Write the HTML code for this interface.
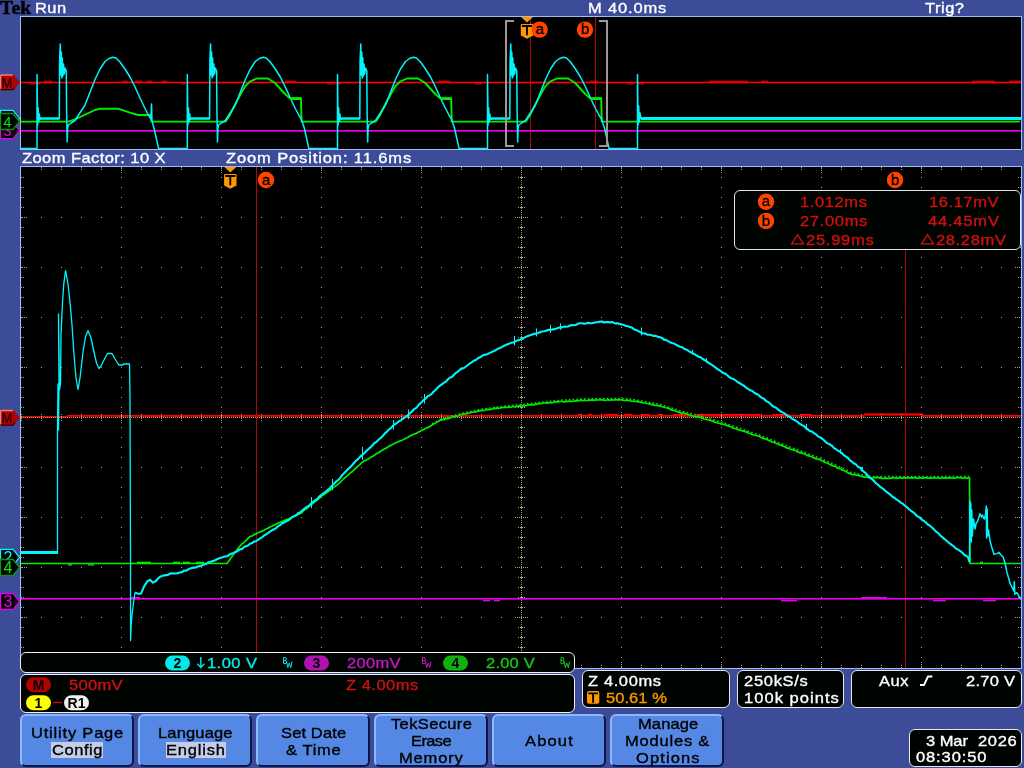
<!DOCTYPE html>
<html><head><meta charset="utf-8"><title>Tek</title>
<style>
html,body{margin:0;padding:0;}
body{width:1024px;height:768px;background:#3c4c98;position:relative;overflow:hidden;font-family:"Liberation Sans",sans-serif;}
.t{position:absolute;white-space:pre;-webkit-text-stroke:0.35px currentColor;font-family:"Liberation Sans",sans-serif;}
.box{position:absolute;box-sizing:border-box;background:#000400;border:1px solid #e8e8ec;border-radius:6px;}
.btn{position:absolute;box-sizing:border-box;top:714px;height:53px;width:114px;background:#5488e4;border-radius:6px;border-top:2px solid #8cb8fc;border-left:2px solid #8cb8fc;border-right:2px solid #0c1648;border-bottom:2px solid #0c1648;}
.hl{position:absolute;background:#c4cce8;}
.pill{position:absolute;width:25px;height:15px;border-radius:8px;}
svg{position:absolute;left:0;top:0;}
</style></head><body>
<div style="position:absolute;left:20px;top:16px;width:1002px;height:134px;box-sizing:border-box;border:1px solid #9cbcf8;background:#000"></div>
<div style="position:absolute;left:20px;top:166px;width:1002px;height:503px;box-sizing:border-box;border:1px solid #9cbcf8;background:#000"></div>
<svg width="1024" height="768" viewBox="0 0 1024 768">
<defs><clipPath id="c1"><rect x="21" y="17" width="1000" height="132"/></clipPath>
<clipPath id="c2"><rect x="21" y="167" width="1000" height="501"/></clipPath></defs>
<g clip-path="url(#c1)">
<g shape-rendering="crispEdges">
<line x1="530.5" x2="530.5" y1="17" y2="149" stroke="#b00808"/>
<line x1="595.5" x2="595.5" y1="17" y2="149" stroke="#b00808"/>
</g>
<g shape-rendering="crispEdges"><rect x="21" y="130" width="1000" height="1" fill="#e400e4"/><rect x="21" y="131" width="1000" height="1" fill="#980098"/></g>
<rect x="21" y="81.7" width="1000" height="1.6" fill="#ff0000"/><rect x="44" y="80.7" width="8" height="1" fill="#ff0000"/><rect x="122" y="80.7" width="6" height="1" fill="#ff0000"/><rect x="135" y="80.7" width="7" height="1" fill="#ff0000"/><rect x="147" y="80.7" width="5" height="1" fill="#ff0000"/><rect x="162" y="80.7" width="5" height="1" fill="#ff0000"/><rect x="285" y="80.7" width="11" height="1" fill="#ff0000"/><rect x="439" y="80.7" width="11" height="1" fill="#ff0000"/><rect x="590" y="80.7" width="8" height="1" fill="#ff0000"/><rect x="709" y="80.7" width="39" height="1" fill="#ff0000"/><rect x="761" y="80.7" width="7" height="1" fill="#ff0000"/><rect x="972" y="80.7" width="23" height="1" fill="#ff0000"/><rect x="1009" y="80.7" width="12" height="1" fill="#ff0000"/><rect x="327" y="83.4" width="7" height="1" fill="#ff0000"/><rect x="335" y="83.4" width="6" height="1" fill="#ff0000"/><rect x="475" y="83.4" width="7" height="1" fill="#ff0000"/><rect x="627" y="83.4" width="7" height="1" fill="#ff0000"/><rect x="638" y="83.4" width="6" height="1" fill="#ff0000"/><rect x="29" y="83.4" width="11" height="1" fill="#ff0000"/><rect x="181" y="83.4" width="5" height="1" fill="#ff0000"/>
<polyline points="21.0,121.6 68.0,121.6 75.0,119.5 85.0,114.6 95.0,110.0 100.0,108.7 118.0,108.7 130.0,112.6 138.0,115.0 150.4,115.0 151.5,121.6 225.6,121.6 229.3,116.0 235.3,103.8 245.3,86.0 250.3,81.4 256.8,78.5 268.0,78.5 275.0,83.0 285.0,94.0 290.0,98.4 301.0,98.4 301.5,121.6 375.8,121.6 379.5,116.0 385.5,103.8 395.5,86.0 400.5,81.4 407.0,78.5 418.2,78.5 425.2,83.0 435.2,94.0 440.2,98.4 451.2,98.4 451.7,121.6 525.8,121.6 529.5,116.0 535.5,103.8 545.5,86.0 550.5,81.4 557.0,78.5 568.2,78.5 575.2,83.0 585.2,94.0 590.2,98.4 601.2,98.4 601.7,121.6 1020.0,121.6" fill="none" stroke="#00ec00" stroke-width="1.9" stroke-linejoin="round"/>
<polyline points="21.0,148.5 37.0,148.5 37.0,74.5 37.6,125.0 38.2,108.0 38.8,122.0 39.4,114.0 40.0,119.5 41.0,118.5 59.3,118.5 59.6,60.0 60.3,44.0 60.8,75.0 61.3,52.0 61.8,78.0 62.3,58.0 62.9,76.0 63.5,64.0 64.2,74.0 65.0,68.0 66.3,71.0 66.6,110.0 67.2,142.0 67.6,128.0 68.3,125.0 71.0,123.0 75.0,120.5 85.0,105.0 95.0,79.5 100.0,69.0 105.0,61.5 109.0,58.5 113.0,57.3 116.0,58.0 120.0,62.0 125.0,69.0 130.0,77.0 135.0,87.0 140.0,98.0 145.0,108.5 149.0,116.0 151.0,119.0 151.5,104.0 152.0,121.0 154.0,128.0 156.0,137.0 158.0,146.0 158.6,148.5 187.3,148.5 187.3,74.5 187.9,125.0 188.5,108.0 189.1,122.0 189.7,114.0 190.3,119.5 191.3,118.5 209.6,118.5 209.9,60.0 210.6,44.0 211.1,75.0 211.6,52.0 212.1,78.0 212.6,58.0 213.2,76.0 213.8,64.0 214.5,74.0 215.3,68.0 216.6,71.0 216.9,110.0 217.5,142.0 217.9,128.0 218.6,125.0 221.3,123.0 225.3,120.5 235.3,105.0 245.3,79.5 250.3,69.0 255.3,61.5 259.3,58.5 263.3,57.3 266.3,58.0 270.3,62.0 275.3,69.0 280.3,77.0 285.3,87.0 290.3,98.0 295.3,108.5 299.3,116.0 301.3,119.0 304.3,128.0 306.3,137.0 308.3,146.0 308.9,148.5 337.5,148.5 337.5,74.5 338.1,125.0 338.7,108.0 339.3,122.0 339.9,114.0 340.5,119.5 341.5,118.5 359.8,118.5 360.1,60.0 360.8,44.0 361.3,75.0 361.8,52.0 362.3,78.0 362.8,58.0 363.4,76.0 364.0,64.0 364.7,74.0 365.5,68.0 366.8,71.0 367.1,110.0 367.7,142.0 368.1,128.0 368.8,125.0 371.5,123.0 375.5,120.5 385.5,105.0 395.5,79.5 400.5,69.0 405.5,61.5 409.5,58.5 413.5,57.3 416.5,58.0 420.5,62.0 425.5,69.0 430.5,77.0 435.5,87.0 440.5,98.0 445.5,108.5 449.5,116.0 451.5,119.0 454.5,128.0 456.5,137.0 458.5,146.0 459.1,148.5 487.5,148.5 487.5,74.5 488.1,125.0 488.7,108.0 489.3,122.0 489.9,114.0 490.5,119.5 491.5,118.5 509.8,118.5 510.1,60.0 510.8,44.0 511.3,75.0 511.8,52.0 512.3,78.0 512.8,58.0 513.4,76.0 514.0,64.0 514.7,74.0 515.5,68.0 516.8,71.0 517.1,110.0 517.7,142.0 518.1,128.0 518.8,125.0 521.5,123.0 525.5,120.5 535.5,105.0 545.5,79.5 550.5,69.0 555.5,61.5 559.5,58.5 563.5,57.3 566.5,58.0 570.5,62.0 575.5,69.0 580.5,77.0 585.5,87.0 590.5,98.0 595.5,108.5 599.5,116.0 601.5,119.0 604.5,128.0 606.5,137.0 608.5,146.0 609.1,148.5 637.5,148.5 637.5,74.5 638.1,125.0 638.7,106.0 639.3,122.0 640.0,113.0 641.0,118.5 1020.0,118.5" fill="none" stroke="#00f4fc" stroke-width="1.5" stroke-linejoin="round"/><rect x="290.0" y="97.2" width="11.5" height="2.8" fill="#00ec00"/><rect x="440.2" y="97.2" width="11.5" height="2.8" fill="#00ec00"/><rect x="590.2" y="97.2" width="11.5" height="2.8" fill="#00ec00"/><rect x="40.0" y="117.4" width="19.5" height="2.3" fill="#00f4fc"/><rect x="190.3" y="117.4" width="19.5" height="2.3" fill="#00f4fc"/><rect x="340.5" y="117.4" width="19.5" height="2.3" fill="#00f4fc"/><rect x="490.5" y="117.4" width="19.5" height="2.3" fill="#00f4fc"/>
<rect x="641" y="117" width="380" height="3" fill="#00f4fc" shape-rendering="crispEdges"/>
<g fill="none" stroke="#a09898" stroke-width="2" shape-rendering="crispEdges">
<polyline points="514,20.5 506,20.5 506,146 514,146"/>
<polyline points="599,20.5 607,20.5 607,146 599,146"/>
</g>
</g>
<g clip-path="url(#c2)">
<g shape-rendering="crispEdges"><rect x="21" y="416" width="47" height="1" fill="#ff0000"/><rect x="21" y="417" width="47" height="1" fill="#a00000"/>
<rect x="67" y="415" width="798" height="1" fill="#ff0000"/><rect x="67" y="416" width="798" height="1" fill="#d00000"/>
<rect x="864" y="414" width="59" height="1" fill="#ff0000"/><rect x="864" y="415" width="59" height="1" fill="#a00000"/><rect x="864" y="413" width="59" height="1" fill="#a00000"/>
<rect x="922" y="415" width="99" height="1" fill="#ff0000"/><rect x="922" y="416" width="99" height="1" fill="#d00000"/><rect x="118" y="416" width="6" height="1" fill="#ff0000"/><rect x="141" y="416" width="26" height="1" fill="#ff0000"/><rect x="173" y="416" width="15" height="1" fill="#ff0000"/><rect x="194" y="416" width="4" height="1" fill="#ff0000"/><rect x="578" y="414" width="4" height="1" fill="#ff0000"/><rect x="588" y="414" width="4" height="1" fill="#ff0000"/><rect x="604" y="414" width="14" height="1" fill="#ff0000"/><rect x="624" y="414" width="8" height="1" fill="#ff0000"/><rect x="642" y="414" width="8" height="1" fill="#ff0000"/><rect x="658" y="414" width="5" height="1" fill="#ff0000"/><rect x="673" y="414" width="15" height="1" fill="#ff0000"/><rect x="696" y="414" width="64" height="1" fill="#ff0000"/><rect x="772" y="414" width="18" height="1" fill="#ff0000"/><rect x="800" y="414" width="12" height="1" fill="#ff0000"/><rect x="846" y="416" width="10" height="1" fill="#ff0000"/><rect x="937" y="416" width="9" height="1" fill="#ff0000"/></g>
<g fill="#b0a078"><g stroke="#b0a078" stroke-width="1" shape-rendering="crispEdges"><line x1="21" x2="1021" y1="217.5" y2="217.5" stroke-dasharray="1 19"/><line x1="121.5" x2="121.5" y1="167" y2="668" stroke-dasharray="1 9"/><line x1="21" x2="1021" y1="267.5" y2="267.5" stroke-dasharray="1 19"/><line x1="221.5" x2="221.5" y1="167" y2="668" stroke-dasharray="1 9"/><line x1="21" x2="1021" y1="317.5" y2="317.5" stroke-dasharray="1 19"/><line x1="321.5" x2="321.5" y1="167" y2="668" stroke-dasharray="1 9"/><line x1="21" x2="1021" y1="367.5" y2="367.5" stroke-dasharray="1 19"/><line x1="421.5" x2="421.5" y1="167" y2="668" stroke-dasharray="1 9"/><line x1="21" x2="1021" y1="467.5" y2="467.5" stroke-dasharray="1 19"/><line x1="621.5" x2="621.5" y1="167" y2="668" stroke-dasharray="1 9"/><line x1="21" x2="1021" y1="517.5" y2="517.5" stroke-dasharray="1 19"/><line x1="721.5" x2="721.5" y1="167" y2="668" stroke-dasharray="1 9"/><line x1="21" x2="1021" y1="567.5" y2="567.5" stroke-dasharray="1 19"/><line x1="821.5" x2="821.5" y1="167" y2="668" stroke-dasharray="1 9"/><line x1="21" x2="1021" y1="617.5" y2="617.5" stroke-dasharray="1 19"/><line x1="921.5" x2="921.5" y1="167" y2="668" stroke-dasharray="1 9"/><line x1="21" x2="1021" y1="417.5" y2="417.5" stroke-dasharray="1 1"/><line x1="521.5" x2="521.5" y1="166" y2="668" stroke-dasharray="3 1 1 1 1 1 1 1"/><line x1="21" x2="1021" y1="414.5" y2="414.5" stroke-dasharray="1 19"/><line x1="21" x2="1021" y1="416.5" y2="416.5" stroke-dasharray="1 19"/><line x1="21" x2="1021" y1="418.5" y2="418.5" stroke-dasharray="1 19"/><line x1="21" x2="1021" y1="420.5" y2="420.5" stroke-dasharray="1 19"/><line x1="121" x2="921" y1="412.5" y2="412.5" stroke-dasharray="1 99"/><line x1="121" x2="921" y1="415.5" y2="415.5" stroke-dasharray="1 99"/><line x1="121" x2="921" y1="422.5" y2="422.5" stroke-dasharray="1 99"/><line x1="518.5" x2="518.5" y1="167" y2="668" stroke-dasharray="0 10 1 9 1 9 1 9 1 9"/><line x1="520.5" x2="520.5" y1="167" y2="668" stroke-dasharray="0 10 1 9 1 9 1 9 1 9"/><line x1="522.5" x2="522.5" y1="167" y2="668" stroke-dasharray="0 10 1 9 1 9 1 9 1 9"/><line x1="524.5" x2="524.5" y1="167" y2="668" stroke-dasharray="0 10 1 9 1 9 1 9 1 9"/><line x1="515.5" x2="515.5" y1="217" y2="618" stroke-dasharray="1 49"/><line x1="517.5" x2="517.5" y1="217" y2="618" stroke-dasharray="1 49"/><line x1="519.5" x2="519.5" y1="217" y2="618" stroke-dasharray="1 49"/><line x1="523.5" x2="523.5" y1="217" y2="618" stroke-dasharray="1 49"/><line x1="525.5" x2="525.5" y1="217" y2="618" stroke-dasharray="1 49"/><line x1="527.5" x2="527.5" y1="217" y2="618" stroke-dasharray="1 49"/></g><rect x="21" y="177" width="1" height="1"/><rect x="1020" y="177" width="1" height="1"/><rect x="23" y="177" width="1" height="1"/><rect x="1018" y="177" width="1" height="1"/><rect x="21" y="187" width="1" height="1"/><rect x="1020" y="187" width="1" height="1"/><rect x="23" y="187" width="1" height="1"/><rect x="1018" y="187" width="1" height="1"/><rect x="21" y="197" width="1" height="1"/><rect x="1020" y="197" width="1" height="1"/><rect x="23" y="197" width="1" height="1"/><rect x="1018" y="197" width="1" height="1"/><rect x="21" y="207" width="1" height="1"/><rect x="1020" y="207" width="1" height="1"/><rect x="23" y="207" width="1" height="1"/><rect x="1018" y="207" width="1" height="1"/><rect x="22" y="217" width="1" height="1"/><rect x="1019" y="217" width="1" height="1"/><rect x="24" y="217" width="1" height="1"/><rect x="1017" y="217" width="1" height="1"/><rect x="26" y="217" width="1" height="1"/><rect x="1015" y="217" width="1" height="1"/><rect x="21" y="227" width="1" height="1"/><rect x="1020" y="227" width="1" height="1"/><rect x="23" y="227" width="1" height="1"/><rect x="1018" y="227" width="1" height="1"/><rect x="21" y="237" width="1" height="1"/><rect x="1020" y="237" width="1" height="1"/><rect x="23" y="237" width="1" height="1"/><rect x="1018" y="237" width="1" height="1"/><rect x="21" y="247" width="1" height="1"/><rect x="1020" y="247" width="1" height="1"/><rect x="23" y="247" width="1" height="1"/><rect x="1018" y="247" width="1" height="1"/><rect x="21" y="257" width="1" height="1"/><rect x="1020" y="257" width="1" height="1"/><rect x="23" y="257" width="1" height="1"/><rect x="1018" y="257" width="1" height="1"/><rect x="22" y="267" width="1" height="1"/><rect x="1019" y="267" width="1" height="1"/><rect x="24" y="267" width="1" height="1"/><rect x="1017" y="267" width="1" height="1"/><rect x="26" y="267" width="1" height="1"/><rect x="1015" y="267" width="1" height="1"/><rect x="21" y="277" width="1" height="1"/><rect x="1020" y="277" width="1" height="1"/><rect x="23" y="277" width="1" height="1"/><rect x="1018" y="277" width="1" height="1"/><rect x="21" y="287" width="1" height="1"/><rect x="1020" y="287" width="1" height="1"/><rect x="23" y="287" width="1" height="1"/><rect x="1018" y="287" width="1" height="1"/><rect x="21" y="297" width="1" height="1"/><rect x="1020" y="297" width="1" height="1"/><rect x="23" y="297" width="1" height="1"/><rect x="1018" y="297" width="1" height="1"/><rect x="21" y="307" width="1" height="1"/><rect x="1020" y="307" width="1" height="1"/><rect x="23" y="307" width="1" height="1"/><rect x="1018" y="307" width="1" height="1"/><rect x="22" y="317" width="1" height="1"/><rect x="1019" y="317" width="1" height="1"/><rect x="24" y="317" width="1" height="1"/><rect x="1017" y="317" width="1" height="1"/><rect x="26" y="317" width="1" height="1"/><rect x="1015" y="317" width="1" height="1"/><rect x="21" y="327" width="1" height="1"/><rect x="1020" y="327" width="1" height="1"/><rect x="23" y="327" width="1" height="1"/><rect x="1018" y="327" width="1" height="1"/><rect x="21" y="337" width="1" height="1"/><rect x="1020" y="337" width="1" height="1"/><rect x="23" y="337" width="1" height="1"/><rect x="1018" y="337" width="1" height="1"/><rect x="21" y="347" width="1" height="1"/><rect x="1020" y="347" width="1" height="1"/><rect x="23" y="347" width="1" height="1"/><rect x="1018" y="347" width="1" height="1"/><rect x="21" y="357" width="1" height="1"/><rect x="1020" y="357" width="1" height="1"/><rect x="23" y="357" width="1" height="1"/><rect x="1018" y="357" width="1" height="1"/><rect x="22" y="367" width="1" height="1"/><rect x="1019" y="367" width="1" height="1"/><rect x="24" y="367" width="1" height="1"/><rect x="1017" y="367" width="1" height="1"/><rect x="26" y="367" width="1" height="1"/><rect x="1015" y="367" width="1" height="1"/><rect x="21" y="377" width="1" height="1"/><rect x="1020" y="377" width="1" height="1"/><rect x="23" y="377" width="1" height="1"/><rect x="1018" y="377" width="1" height="1"/><rect x="21" y="387" width="1" height="1"/><rect x="1020" y="387" width="1" height="1"/><rect x="23" y="387" width="1" height="1"/><rect x="1018" y="387" width="1" height="1"/><rect x="21" y="397" width="1" height="1"/><rect x="1020" y="397" width="1" height="1"/><rect x="23" y="397" width="1" height="1"/><rect x="1018" y="397" width="1" height="1"/><rect x="21" y="407" width="1" height="1"/><rect x="1020" y="407" width="1" height="1"/><rect x="23" y="407" width="1" height="1"/><rect x="1018" y="407" width="1" height="1"/><rect x="21" y="427" width="1" height="1"/><rect x="1020" y="427" width="1" height="1"/><rect x="23" y="427" width="1" height="1"/><rect x="1018" y="427" width="1" height="1"/><rect x="21" y="437" width="1" height="1"/><rect x="1020" y="437" width="1" height="1"/><rect x="23" y="437" width="1" height="1"/><rect x="1018" y="437" width="1" height="1"/><rect x="21" y="447" width="1" height="1"/><rect x="1020" y="447" width="1" height="1"/><rect x="23" y="447" width="1" height="1"/><rect x="1018" y="447" width="1" height="1"/><rect x="21" y="457" width="1" height="1"/><rect x="1020" y="457" width="1" height="1"/><rect x="23" y="457" width="1" height="1"/><rect x="1018" y="457" width="1" height="1"/><rect x="22" y="467" width="1" height="1"/><rect x="1019" y="467" width="1" height="1"/><rect x="24" y="467" width="1" height="1"/><rect x="1017" y="467" width="1" height="1"/><rect x="26" y="467" width="1" height="1"/><rect x="1015" y="467" width="1" height="1"/><rect x="21" y="477" width="1" height="1"/><rect x="1020" y="477" width="1" height="1"/><rect x="23" y="477" width="1" height="1"/><rect x="1018" y="477" width="1" height="1"/><rect x="21" y="487" width="1" height="1"/><rect x="1020" y="487" width="1" height="1"/><rect x="23" y="487" width="1" height="1"/><rect x="1018" y="487" width="1" height="1"/><rect x="21" y="497" width="1" height="1"/><rect x="1020" y="497" width="1" height="1"/><rect x="23" y="497" width="1" height="1"/><rect x="1018" y="497" width="1" height="1"/><rect x="21" y="507" width="1" height="1"/><rect x="1020" y="507" width="1" height="1"/><rect x="23" y="507" width="1" height="1"/><rect x="1018" y="507" width="1" height="1"/><rect x="22" y="517" width="1" height="1"/><rect x="1019" y="517" width="1" height="1"/><rect x="24" y="517" width="1" height="1"/><rect x="1017" y="517" width="1" height="1"/><rect x="26" y="517" width="1" height="1"/><rect x="1015" y="517" width="1" height="1"/><rect x="21" y="527" width="1" height="1"/><rect x="1020" y="527" width="1" height="1"/><rect x="23" y="527" width="1" height="1"/><rect x="1018" y="527" width="1" height="1"/><rect x="21" y="537" width="1" height="1"/><rect x="1020" y="537" width="1" height="1"/><rect x="23" y="537" width="1" height="1"/><rect x="1018" y="537" width="1" height="1"/><rect x="21" y="547" width="1" height="1"/><rect x="1020" y="547" width="1" height="1"/><rect x="23" y="547" width="1" height="1"/><rect x="1018" y="547" width="1" height="1"/><rect x="21" y="557" width="1" height="1"/><rect x="1020" y="557" width="1" height="1"/><rect x="23" y="557" width="1" height="1"/><rect x="1018" y="557" width="1" height="1"/><rect x="22" y="567" width="1" height="1"/><rect x="1019" y="567" width="1" height="1"/><rect x="24" y="567" width="1" height="1"/><rect x="1017" y="567" width="1" height="1"/><rect x="26" y="567" width="1" height="1"/><rect x="1015" y="567" width="1" height="1"/><rect x="21" y="577" width="1" height="1"/><rect x="1020" y="577" width="1" height="1"/><rect x="23" y="577" width="1" height="1"/><rect x="1018" y="577" width="1" height="1"/><rect x="21" y="587" width="1" height="1"/><rect x="1020" y="587" width="1" height="1"/><rect x="23" y="587" width="1" height="1"/><rect x="1018" y="587" width="1" height="1"/><rect x="21" y="597" width="1" height="1"/><rect x="1020" y="597" width="1" height="1"/><rect x="23" y="597" width="1" height="1"/><rect x="1018" y="597" width="1" height="1"/><rect x="21" y="607" width="1" height="1"/><rect x="1020" y="607" width="1" height="1"/><rect x="23" y="607" width="1" height="1"/><rect x="1018" y="607" width="1" height="1"/><rect x="22" y="617" width="1" height="1"/><rect x="1019" y="617" width="1" height="1"/><rect x="24" y="617" width="1" height="1"/><rect x="1017" y="617" width="1" height="1"/><rect x="26" y="617" width="1" height="1"/><rect x="1015" y="617" width="1" height="1"/><rect x="21" y="627" width="1" height="1"/><rect x="1020" y="627" width="1" height="1"/><rect x="23" y="627" width="1" height="1"/><rect x="1018" y="627" width="1" height="1"/><rect x="21" y="637" width="1" height="1"/><rect x="1020" y="637" width="1" height="1"/><rect x="23" y="637" width="1" height="1"/><rect x="1018" y="637" width="1" height="1"/><rect x="21" y="647" width="1" height="1"/><rect x="1020" y="647" width="1" height="1"/><rect x="23" y="647" width="1" height="1"/><rect x="1018" y="647" width="1" height="1"/><rect x="21" y="657" width="1" height="1"/><rect x="1020" y="657" width="1" height="1"/><rect x="23" y="657" width="1" height="1"/><rect x="1018" y="657" width="1" height="1"/><rect x="41" y="167" width="1" height="1"/><rect x="41" y="667" width="1" height="1"/><rect x="41" y="169" width="1" height="1"/><rect x="41" y="665" width="1" height="1"/><rect x="61" y="167" width="1" height="1"/><rect x="61" y="667" width="1" height="1"/><rect x="61" y="169" width="1" height="1"/><rect x="61" y="665" width="1" height="1"/><rect x="81" y="167" width="1" height="1"/><rect x="81" y="667" width="1" height="1"/><rect x="81" y="169" width="1" height="1"/><rect x="81" y="665" width="1" height="1"/><rect x="101" y="167" width="1" height="1"/><rect x="101" y="667" width="1" height="1"/><rect x="101" y="169" width="1" height="1"/><rect x="101" y="665" width="1" height="1"/><rect x="121" y="168" width="1" height="1"/><rect x="121" y="666" width="1" height="1"/><rect x="121" y="170" width="1" height="1"/><rect x="121" y="664" width="1" height="1"/><rect x="121" y="172" width="1" height="1"/><rect x="121" y="662" width="1" height="1"/><rect x="141" y="167" width="1" height="1"/><rect x="141" y="667" width="1" height="1"/><rect x="141" y="169" width="1" height="1"/><rect x="141" y="665" width="1" height="1"/><rect x="161" y="167" width="1" height="1"/><rect x="161" y="667" width="1" height="1"/><rect x="161" y="169" width="1" height="1"/><rect x="161" y="665" width="1" height="1"/><rect x="181" y="167" width="1" height="1"/><rect x="181" y="667" width="1" height="1"/><rect x="181" y="169" width="1" height="1"/><rect x="181" y="665" width="1" height="1"/><rect x="201" y="167" width="1" height="1"/><rect x="201" y="667" width="1" height="1"/><rect x="201" y="169" width="1" height="1"/><rect x="201" y="665" width="1" height="1"/><rect x="221" y="168" width="1" height="1"/><rect x="221" y="666" width="1" height="1"/><rect x="221" y="170" width="1" height="1"/><rect x="221" y="664" width="1" height="1"/><rect x="221" y="172" width="1" height="1"/><rect x="221" y="662" width="1" height="1"/><rect x="241" y="167" width="1" height="1"/><rect x="241" y="667" width="1" height="1"/><rect x="241" y="169" width="1" height="1"/><rect x="241" y="665" width="1" height="1"/><rect x="261" y="167" width="1" height="1"/><rect x="261" y="667" width="1" height="1"/><rect x="261" y="169" width="1" height="1"/><rect x="261" y="665" width="1" height="1"/><rect x="281" y="167" width="1" height="1"/><rect x="281" y="667" width="1" height="1"/><rect x="281" y="169" width="1" height="1"/><rect x="281" y="665" width="1" height="1"/><rect x="301" y="167" width="1" height="1"/><rect x="301" y="667" width="1" height="1"/><rect x="301" y="169" width="1" height="1"/><rect x="301" y="665" width="1" height="1"/><rect x="321" y="168" width="1" height="1"/><rect x="321" y="666" width="1" height="1"/><rect x="321" y="170" width="1" height="1"/><rect x="321" y="664" width="1" height="1"/><rect x="321" y="172" width="1" height="1"/><rect x="321" y="662" width="1" height="1"/><rect x="341" y="167" width="1" height="1"/><rect x="341" y="667" width="1" height="1"/><rect x="341" y="169" width="1" height="1"/><rect x="341" y="665" width="1" height="1"/><rect x="361" y="167" width="1" height="1"/><rect x="361" y="667" width="1" height="1"/><rect x="361" y="169" width="1" height="1"/><rect x="361" y="665" width="1" height="1"/><rect x="381" y="167" width="1" height="1"/><rect x="381" y="667" width="1" height="1"/><rect x="381" y="169" width="1" height="1"/><rect x="381" y="665" width="1" height="1"/><rect x="401" y="167" width="1" height="1"/><rect x="401" y="667" width="1" height="1"/><rect x="401" y="169" width="1" height="1"/><rect x="401" y="665" width="1" height="1"/><rect x="421" y="168" width="1" height="1"/><rect x="421" y="666" width="1" height="1"/><rect x="421" y="170" width="1" height="1"/><rect x="421" y="664" width="1" height="1"/><rect x="421" y="172" width="1" height="1"/><rect x="421" y="662" width="1" height="1"/><rect x="441" y="167" width="1" height="1"/><rect x="441" y="667" width="1" height="1"/><rect x="441" y="169" width="1" height="1"/><rect x="441" y="665" width="1" height="1"/><rect x="461" y="167" width="1" height="1"/><rect x="461" y="667" width="1" height="1"/><rect x="461" y="169" width="1" height="1"/><rect x="461" y="665" width="1" height="1"/><rect x="481" y="167" width="1" height="1"/><rect x="481" y="667" width="1" height="1"/><rect x="481" y="169" width="1" height="1"/><rect x="481" y="665" width="1" height="1"/><rect x="501" y="167" width="1" height="1"/><rect x="501" y="667" width="1" height="1"/><rect x="501" y="169" width="1" height="1"/><rect x="501" y="665" width="1" height="1"/><rect x="521" y="168" width="1" height="1"/><rect x="521" y="666" width="1" height="1"/><rect x="521" y="170" width="1" height="1"/><rect x="521" y="664" width="1" height="1"/><rect x="521" y="172" width="1" height="1"/><rect x="521" y="662" width="1" height="1"/><rect x="541" y="167" width="1" height="1"/><rect x="541" y="667" width="1" height="1"/><rect x="541" y="169" width="1" height="1"/><rect x="541" y="665" width="1" height="1"/><rect x="561" y="167" width="1" height="1"/><rect x="561" y="667" width="1" height="1"/><rect x="561" y="169" width="1" height="1"/><rect x="561" y="665" width="1" height="1"/><rect x="581" y="167" width="1" height="1"/><rect x="581" y="667" width="1" height="1"/><rect x="581" y="169" width="1" height="1"/><rect x="581" y="665" width="1" height="1"/><rect x="601" y="167" width="1" height="1"/><rect x="601" y="667" width="1" height="1"/><rect x="601" y="169" width="1" height="1"/><rect x="601" y="665" width="1" height="1"/><rect x="621" y="168" width="1" height="1"/><rect x="621" y="666" width="1" height="1"/><rect x="621" y="170" width="1" height="1"/><rect x="621" y="664" width="1" height="1"/><rect x="621" y="172" width="1" height="1"/><rect x="621" y="662" width="1" height="1"/><rect x="641" y="167" width="1" height="1"/><rect x="641" y="667" width="1" height="1"/><rect x="641" y="169" width="1" height="1"/><rect x="641" y="665" width="1" height="1"/><rect x="661" y="167" width="1" height="1"/><rect x="661" y="667" width="1" height="1"/><rect x="661" y="169" width="1" height="1"/><rect x="661" y="665" width="1" height="1"/><rect x="681" y="167" width="1" height="1"/><rect x="681" y="667" width="1" height="1"/><rect x="681" y="169" width="1" height="1"/><rect x="681" y="665" width="1" height="1"/><rect x="701" y="167" width="1" height="1"/><rect x="701" y="667" width="1" height="1"/><rect x="701" y="169" width="1" height="1"/><rect x="701" y="665" width="1" height="1"/><rect x="721" y="168" width="1" height="1"/><rect x="721" y="666" width="1" height="1"/><rect x="721" y="170" width="1" height="1"/><rect x="721" y="664" width="1" height="1"/><rect x="721" y="172" width="1" height="1"/><rect x="721" y="662" width="1" height="1"/><rect x="741" y="167" width="1" height="1"/><rect x="741" y="667" width="1" height="1"/><rect x="741" y="169" width="1" height="1"/><rect x="741" y="665" width="1" height="1"/><rect x="761" y="167" width="1" height="1"/><rect x="761" y="667" width="1" height="1"/><rect x="761" y="169" width="1" height="1"/><rect x="761" y="665" width="1" height="1"/><rect x="781" y="167" width="1" height="1"/><rect x="781" y="667" width="1" height="1"/><rect x="781" y="169" width="1" height="1"/><rect x="781" y="665" width="1" height="1"/><rect x="801" y="167" width="1" height="1"/><rect x="801" y="667" width="1" height="1"/><rect x="801" y="169" width="1" height="1"/><rect x="801" y="665" width="1" height="1"/><rect x="821" y="168" width="1" height="1"/><rect x="821" y="666" width="1" height="1"/><rect x="821" y="170" width="1" height="1"/><rect x="821" y="664" width="1" height="1"/><rect x="821" y="172" width="1" height="1"/><rect x="821" y="662" width="1" height="1"/><rect x="841" y="167" width="1" height="1"/><rect x="841" y="667" width="1" height="1"/><rect x="841" y="169" width="1" height="1"/><rect x="841" y="665" width="1" height="1"/><rect x="861" y="167" width="1" height="1"/><rect x="861" y="667" width="1" height="1"/><rect x="861" y="169" width="1" height="1"/><rect x="861" y="665" width="1" height="1"/><rect x="881" y="167" width="1" height="1"/><rect x="881" y="667" width="1" height="1"/><rect x="881" y="169" width="1" height="1"/><rect x="881" y="665" width="1" height="1"/><rect x="901" y="167" width="1" height="1"/><rect x="901" y="667" width="1" height="1"/><rect x="901" y="169" width="1" height="1"/><rect x="901" y="665" width="1" height="1"/><rect x="921" y="168" width="1" height="1"/><rect x="921" y="666" width="1" height="1"/><rect x="921" y="170" width="1" height="1"/><rect x="921" y="664" width="1" height="1"/><rect x="921" y="172" width="1" height="1"/><rect x="921" y="662" width="1" height="1"/><rect x="941" y="167" width="1" height="1"/><rect x="941" y="667" width="1" height="1"/><rect x="941" y="169" width="1" height="1"/><rect x="941" y="665" width="1" height="1"/><rect x="961" y="167" width="1" height="1"/><rect x="961" y="667" width="1" height="1"/><rect x="961" y="169" width="1" height="1"/><rect x="961" y="665" width="1" height="1"/><rect x="981" y="167" width="1" height="1"/><rect x="981" y="667" width="1" height="1"/><rect x="981" y="169" width="1" height="1"/><rect x="981" y="665" width="1" height="1"/><rect x="1001" y="167" width="1" height="1"/><rect x="1001" y="667" width="1" height="1"/><rect x="1001" y="169" width="1" height="1"/><rect x="1001" y="665" width="1" height="1"/></g>
<g shape-rendering="crispEdges">
<line x1="256.5" x2="256.5" y1="167" y2="652" stroke="#b00808" stroke-width="1"/>
<line x1="905.5" x2="905.5" y1="250" y2="668" stroke="#b00808" stroke-width="1"/>
</g>
<g shape-rendering="crispEdges"><rect x="21" y="598" width="1000" height="1" fill="#e400e4"/><rect x="21" y="599" width="1000" height="1" fill="#980098"/></g><rect x="861" y="597" width="26" height="1.3" fill="#e400e4"/><rect x="131" y="597" width="9" height="1.3" fill="#e400e4"/><rect x="483" y="600" width="7" height="1.3" fill="#e400e4"/><rect x="494" y="600" width="6" height="1.3" fill="#e400e4"/><rect x="781" y="600" width="16" height="1.3" fill="#e400e4"/><rect x="933" y="600" width="13" height="1.3" fill="#e400e4"/><rect x="983" y="600" width="13" height="1.3" fill="#e400e4"/>

<polyline points="21.0,563.5 23.0,563.5 25.0,563.5 27.0,563.5 29.0,563.5 31.0,563.5 33.0,563.5 35.0,563.5 37.0,563.5 39.0,563.5 41.0,563.5 43.0,563.5 45.0,563.5 47.0,563.5 49.0,563.5 51.0,563.5 53.0,563.5 55.0,563.5 57.0,563.5 59.0,563.5 61.0,563.5 63.0,563.5 65.0,563.5 67.0,563.5 69.0,563.5 71.0,563.5 73.0,563.5 75.0,563.5 77.0,563.5 79.0,563.5 81.0,563.5 83.0,563.5 85.0,563.5 87.0,563.5 89.0,563.5 91.0,563.5 93.0,563.5 95.0,563.5 97.0,563.5 99.0,563.5 101.0,563.5 103.0,563.5 105.0,563.5 107.0,563.5 109.0,563.5 111.0,563.5 113.0,563.5 115.0,563.5 117.0,563.5 119.0,563.5 121.0,563.5 123.0,563.5 125.0,563.5 127.0,563.5 129.0,563.5 131.0,563.5 133.0,563.5 135.0,563.5 137.0,563.5 139.0,563.5 141.0,563.5 143.0,563.5 145.0,563.5 147.0,563.5 149.0,563.5 151.0,563.5 153.0,563.5 155.0,563.5 157.0,563.5 159.0,563.5 161.0,563.5 163.0,563.5 165.0,563.5 167.0,563.5 169.0,563.5 171.0,563.5 173.0,563.5 175.0,563.5 177.0,563.5 179.0,563.5 181.0,563.5 183.0,563.5 185.0,563.5 187.0,563.5 189.0,563.5 191.0,563.5 193.0,563.5 195.0,563.5 197.0,563.5 199.0,563.5 201.0,563.5 203.0,563.5 205.0,563.5 207.0,563.5 209.0,563.5 211.0,563.5 213.0,563.5 215.0,563.5 217.0,563.5 219.0,563.5 221.0,563.5 223.0,563.5 225.0,563.5 227.0,563.5 229.2,560.4 231.3,557.5 233.5,554.6 235.7,551.8 237.8,548.7 240.0,546.0 242.0,543.9 244.0,542.5 246.0,540.6 248.0,538.4 250.0,536.3 252.0,536.0 254.0,534.7 256.0,533.9 258.0,532.7 260.0,532.0 262.0,531.1 264.0,530.2 266.0,529.0 268.0,528.3 270.0,526.9 272.0,526.2 274.0,525.1 276.0,524.3 278.0,523.1 280.0,522.2 282.0,521.5 284.0,520.6 286.0,519.9 288.0,519.0 290.0,518.3 292.0,517.3 294.0,516.5 296.0,515.7 298.0,514.5 300.0,513.6 302.0,512.4 304.0,510.2 306.0,509.0 308.0,507.3 310.0,505.3 312.0,504.2 314.0,502.6 316.0,500.8 318.0,499.3 320.0,497.7 322.0,495.7 324.0,494.5 326.0,493.0 328.0,491.7 330.0,490.2 332.0,488.7 334.0,487.1 336.0,485.8 338.0,484.1 340.0,482.6 342.0,480.5 344.0,478.5 346.0,476.8 348.0,475.1 350.0,473.1 352.0,471.8 354.0,469.8 356.0,468.0 358.0,466.2 360.0,464.4 362.0,462.5 364.1,460.9 366.1,460.2 368.2,459.0 370.3,457.6 372.3,456.4 374.4,455.2 376.5,453.6 378.5,452.8 380.6,451.2 382.7,449.9 384.7,448.8 386.8,447.9 388.9,446.3 390.9,445.4 393.0,444.3 395.3,443.0 397.7,441.9 400.0,441.0 402.0,440.2 404.0,439.3 406.0,438.2 408.0,437.3 410.0,435.9 412.0,435.0 414.0,434.1 416.0,433.5 418.0,432.2 420.0,431.5 422.0,430.1 424.0,429.2 426.0,428.2 428.0,427.4 430.0,426.3 432.0,425.1 434.0,423.7 436.0,422.8 438.0,421.6 440.0,420.5 442.0,419.7 444.0,419.7 446.0,418.6 448.0,418.6 450.0,418.1 452.0,416.9 454.0,416.6 456.0,416.3 458.0,415.9 460.0,415.0 462.0,414.4 464.0,413.9 466.0,414.0 468.0,413.1 470.0,412.9 472.0,412.2 474.0,412.0 476.0,411.9 478.0,410.9 480.0,410.9 482.0,410.4 484.0,410.4 486.0,410.0 488.0,409.4 490.0,409.6 492.0,409.1 494.0,408.5 496.0,408.2 498.0,408.3 500.0,408.0 502.1,407.7 504.2,407.3 506.3,407.3 508.4,407.1 510.5,407.2 512.6,406.5 514.7,406.8 516.8,406.6 518.9,405.9 521.0,406.3 523.1,405.9 525.2,405.8 527.3,405.1 529.4,404.9 531.6,404.6 533.7,404.8 535.8,404.3 537.9,403.9 540.0,403.6 542.0,403.3 544.0,403.0 546.0,402.8 548.0,403.1 550.0,402.5 552.0,402.8 554.0,402.1 556.0,401.9 558.0,401.9 560.0,401.5 562.0,401.5 564.0,401.8 566.0,401.6 568.0,401.4 570.0,401.2 572.0,401.3 574.0,401.2 576.0,400.8 578.0,400.8 580.0,400.2 582.0,400.6 584.0,400.4 586.0,400.5 588.0,400.4 590.0,400.1 592.0,399.9 594.0,400.4 596.0,399.8 598.0,400.0 600.0,399.9 602.0,399.9 604.0,400.2 606.0,400.3 608.0,399.8 610.0,400.1 612.0,399.9 614.0,400.0 616.0,399.9 618.0,399.8 620.0,399.8 622.0,399.9 624.0,400.5 626.0,400.3 628.0,400.2 630.0,400.8 632.2,401.2 634.4,401.3 636.6,401.4 638.8,401.9 641.0,402.2 643.1,402.8 645.2,403.0 647.3,403.5 649.4,403.9 651.6,404.5 653.7,405.1 655.8,405.4 657.9,405.6 660.0,405.9 662.0,406.7 664.0,407.2 666.0,407.8 668.0,408.3 670.0,409.1 672.0,410.2 674.0,410.3 676.0,411.2 678.0,411.9 680.0,412.8 682.0,412.8 684.0,413.3 686.0,413.8 688.0,414.4 690.0,415.0 692.0,415.8 694.0,416.2 696.0,416.8 698.0,416.7 700.0,417.2 702.1,418.3 704.2,419.0 706.3,419.3 708.4,420.0 710.5,420.3 712.6,421.1 714.7,422.1 716.8,422.7 718.9,423.3 721.0,424.0 723.1,424.2 725.2,424.8 727.3,425.6 729.4,426.5 731.6,427.3 733.7,428.2 735.8,428.8 737.9,429.4 740.0,430.2 742.0,430.7 744.0,431.4 746.0,431.8 748.0,433.0 750.0,433.3 752.0,434.5 754.0,435.0 756.0,435.5 758.0,436.0 760.0,436.8 762.0,437.9 764.0,438.7 766.0,439.1 768.0,439.9 770.0,441.0 772.0,441.9 774.0,442.5 776.0,443.2 778.0,444.3 780.0,444.7 782.0,445.6 784.0,446.5 786.0,447.6 788.0,448.1 790.0,449.0 792.0,449.5 794.0,450.1 796.0,450.8 798.0,452.1 800.0,452.6 802.0,453.1 804.0,453.7 806.0,454.7 808.0,455.6 810.0,456.2 812.0,456.8 814.0,457.9 816.0,458.8 818.0,459.1 820.0,459.7 822.0,460.8 824.0,461.7 826.0,462.7 828.0,463.3 830.0,464.6 832.0,465.4 834.0,466.1 836.0,466.8 838.0,468.2 840.0,468.6 842.0,469.9 844.0,470.5 846.0,471.5 848.0,472.9 850.0,473.6 852.0,474.5 854.0,474.6 856.0,474.9 858.0,475.3 860.0,475.9 862.0,476.5 864.0,477.1 866.0,477.0 868.0,477.5 870.0,477.8 872.0,478.3 874.0,477.7 876.0,477.7 878.0,477.7 880.1,477.9 882.1,478.3 884.1,478.3 886.1,478.2 888.1,478.3 890.1,478.3 892.1,477.9 894.1,477.8 896.1,478.3 898.1,478.2 900.2,477.7 902.2,478.1 904.2,477.9 906.2,477.9 908.2,477.9 910.2,477.8 912.2,477.7 914.2,477.8 916.2,477.9 918.2,478.3 920.3,477.7 922.3,478.3 924.3,477.8 926.3,477.9 928.3,478.2 930.3,478.2 932.3,478.0 934.3,477.7 936.3,478.0 938.3,477.9 940.4,478.3 942.4,477.8 944.4,477.9 946.4,478.3 948.4,477.7 950.4,477.9 952.4,478.2 954.4,478.2 956.4,477.7 958.4,477.7 960.5,477.7 962.5,478.3 964.5,477.8 966.5,478.2 968.5,478.0 969.5,478.0 970.0,563.5 972.0,563.5 974.1,563.5 976.1,563.5 978.2,563.5 980.2,563.5 982.2,563.5 984.3,563.5 986.3,563.5 988.4,563.5 990.4,563.5 992.4,563.5 994.5,563.5 996.5,563.5 998.6,563.5 1000.6,563.5 1002.6,563.5 1004.7,563.5 1006.7,563.5 1008.8,563.5 1010.8,563.5 1012.8,563.5 1014.9,563.5 1016.9,563.5 1019.0,563.5 1021.0,563.5" fill="none" stroke="#00ec00" stroke-width="1.7" stroke-linejoin="round"/><g fill="#00ec00"><rect x="432.0" y="422.8" width="1.6" height="1.6"/><rect x="435.8" y="420.7" width="1.6" height="1.6"/><rect x="439.6" y="418.5" width="1.6" height="1.6"/><rect x="443.4" y="417.4" width="1.6" height="1.6"/><rect x="447.2" y="416.3" width="1.6" height="1.6"/><rect x="451.0" y="415.3" width="1.6" height="1.6"/><rect x="454.8" y="414.2" width="1.6" height="1.6"/><rect x="458.6" y="413.2" width="1.6" height="1.6"/><rect x="462.4" y="412.3" width="1.6" height="1.6"/><rect x="466.2" y="411.5" width="1.6" height="1.6"/><rect x="470.0" y="410.6" width="1.6" height="1.6"/><rect x="473.8" y="409.8" width="1.6" height="1.6"/><rect x="477.6" y="409.0" width="1.6" height="1.6"/><rect x="481.4" y="408.3" width="1.6" height="1.6"/><rect x="485.2" y="407.8" width="1.6" height="1.6"/><rect x="489.0" y="407.3" width="1.6" height="1.6"/><rect x="492.8" y="406.8" width="1.6" height="1.6"/><rect x="496.6" y="406.3" width="1.6" height="1.6"/><rect x="500.4" y="405.8" width="1.6" height="1.6"/><rect x="504.2" y="405.4" width="1.6" height="1.6"/><rect x="508.0" y="405.0" width="1.6" height="1.6"/><rect x="511.8" y="404.7" width="1.6" height="1.6"/><rect x="515.6" y="404.3" width="1.6" height="1.6"/><rect x="519.4" y="404.0" width="1.6" height="1.6"/><rect x="523.2" y="403.5" width="1.6" height="1.6"/><rect x="527.0" y="403.1" width="1.6" height="1.6"/><rect x="530.8" y="402.6" width="1.6" height="1.6"/><rect x="534.6" y="402.2" width="1.6" height="1.6"/><rect x="538.4" y="401.7" width="1.6" height="1.6"/><rect x="542.2" y="401.3" width="1.6" height="1.6"/><rect x="546.0" y="400.9" width="1.6" height="1.6"/><rect x="549.8" y="400.5" width="1.6" height="1.6"/><rect x="553.6" y="400.1" width="1.6" height="1.6"/><rect x="557.4" y="399.8" width="1.6" height="1.6"/><rect x="561.2" y="399.4" width="1.6" height="1.6"/><rect x="565.0" y="399.2" width="1.6" height="1.6"/><rect x="568.8" y="399.0" width="1.6" height="1.6"/><rect x="572.6" y="398.7" width="1.6" height="1.6"/><rect x="576.4" y="398.5" width="1.6" height="1.6"/><rect x="580.2" y="398.3" width="1.6" height="1.6"/><rect x="584.0" y="398.2" width="1.6" height="1.6"/><rect x="587.8" y="398.1" width="1.6" height="1.6"/><rect x="591.6" y="398.0" width="1.6" height="1.6"/><rect x="595.4" y="397.9" width="1.6" height="1.6"/><rect x="599.2" y="397.8" width="1.6" height="1.6"/><rect x="603.0" y="397.8" width="1.6" height="1.6"/><rect x="606.8" y="397.8" width="1.6" height="1.6"/><rect x="610.6" y="397.8" width="1.6" height="1.6"/><rect x="614.4" y="397.8" width="1.6" height="1.6"/><rect x="618.2" y="397.8" width="1.6" height="1.6"/><rect x="622.0" y="397.9" width="1.6" height="1.6"/><rect x="625.8" y="398.1" width="1.6" height="1.6"/><rect x="629.6" y="398.3" width="1.6" height="1.6"/><rect x="633.4" y="398.9" width="1.6" height="1.6"/><rect x="637.2" y="399.6" width="1.6" height="1.6"/><rect x="641.0" y="400.3" width="1.6" height="1.6"/><rect x="644.8" y="401.0" width="1.6" height="1.6"/><rect x="648.6" y="401.7" width="1.6" height="1.6"/><rect x="652.4" y="402.4" width="1.6" height="1.6"/><rect x="656.2" y="403.1" width="1.6" height="1.6"/><rect x="660.0" y="403.8" width="1.6" height="1.6"/><rect x="663.8" y="405.0" width="1.6" height="1.6"/><rect x="667.6" y="406.3" width="1.6" height="1.6"/><rect x="671.4" y="407.5" width="1.6" height="1.6"/><rect x="675.2" y="408.7" width="1.6" height="1.6"/><rect x="679.0" y="410.0" width="1.6" height="1.6"/><rect x="682.8" y="411.0" width="1.6" height="1.6"/><rect x="686.6" y="411.9" width="1.6" height="1.6"/><rect x="690.4" y="412.9" width="1.6" height="1.6"/><rect x="694.2" y="413.8" width="1.6" height="1.6"/><rect x="698.0" y="414.8" width="1.6" height="1.6"/><rect x="701.8" y="415.8" width="1.6" height="1.6"/><rect x="705.6" y="417.0" width="1.6" height="1.6"/><rect x="709.4" y="418.1" width="1.6" height="1.6"/><rect x="713.2" y="419.2" width="1.6" height="1.6"/><rect x="717.0" y="420.3" width="1.6" height="1.6"/><rect x="720.8" y="421.4" width="1.6" height="1.6"/><rect x="724.6" y="422.7" width="1.6" height="1.6"/><rect x="728.4" y="424.0" width="1.6" height="1.6"/><rect x="732.2" y="425.2" width="1.6" height="1.6"/><rect x="736.0" y="426.5" width="1.6" height="1.6"/><rect x="739.8" y="427.7" width="1.6" height="1.6"/><rect x="743.6" y="429.1" width="1.6" height="1.6"/><rect x="747.4" y="430.4" width="1.6" height="1.6"/><rect x="751.2" y="431.7" width="1.6" height="1.6"/><rect x="755.0" y="433.0" width="1.6" height="1.6"/><rect x="758.8" y="434.4" width="1.6" height="1.6"/><rect x="762.6" y="435.8" width="1.6" height="1.6"/><rect x="766.4" y="437.4" width="1.6" height="1.6"/><rect x="770.2" y="438.9" width="1.6" height="1.6"/><rect x="774.0" y="440.4" width="1.6" height="1.6"/><rect x="777.8" y="441.9" width="1.6" height="1.6"/><rect x="781.6" y="443.4" width="1.6" height="1.6"/><rect x="785.4" y="444.8" width="1.6" height="1.6"/><rect x="789.2" y="446.2" width="1.6" height="1.6"/><rect x="793.0" y="447.7" width="1.6" height="1.6"/><rect x="796.8" y="449.1" width="1.6" height="1.6"/><rect x="800.6" y="450.5" width="1.6" height="1.6"/><rect x="804.4" y="451.9" width="1.6" height="1.6"/><rect x="808.2" y="453.4" width="1.6" height="1.6"/><rect x="812.0" y="454.8" width="1.6" height="1.6"/><rect x="815.8" y="456.2" width="1.6" height="1.6"/><rect x="819.6" y="457.6" width="1.6" height="1.6"/><rect x="823.4" y="459.3" width="1.6" height="1.6"/><rect x="827.2" y="460.9" width="1.6" height="1.6"/><rect x="831.0" y="462.6" width="1.6" height="1.6"/><rect x="834.8" y="464.2" width="1.6" height="1.6"/><rect x="838.6" y="465.9" width="1.6" height="1.6"/><rect x="842.4" y="467.7" width="1.6" height="1.6"/><rect x="846.2" y="469.6" width="1.6" height="1.6"/><rect x="850.0" y="471.5" width="1.6" height="1.6"/><rect x="853.8" y="472.4" width="1.6" height="1.6"/><rect x="857.6" y="473.2" width="1.6" height="1.6"/><rect x="861.4" y="474.1" width="1.6" height="1.6"/><rect x="865.2" y="474.8" width="1.6" height="1.6"/><rect x="869.0" y="475.6" width="1.6" height="1.6"/><rect x="872.8" y="475.8" width="1.6" height="1.6"/><rect x="876.6" y="475.8" width="1.6" height="1.6"/><rect x="880.4" y="475.8" width="1.6" height="1.6"/><rect x="884.2" y="475.8" width="1.6" height="1.6"/><rect x="888.0" y="475.8" width="1.6" height="1.6"/><rect x="891.8" y="475.8" width="1.6" height="1.6"/><rect x="895.6" y="475.8" width="1.6" height="1.6"/><rect x="899.4" y="475.8" width="1.6" height="1.6"/><rect x="903.2" y="475.8" width="1.6" height="1.6"/><rect x="907.0" y="475.8" width="1.6" height="1.6"/><rect x="910.8" y="475.8" width="1.6" height="1.6"/><rect x="914.6" y="475.8" width="1.6" height="1.6"/><rect x="918.4" y="475.8" width="1.6" height="1.6"/><rect x="922.2" y="475.8" width="1.6" height="1.6"/><rect x="926.0" y="475.8" width="1.6" height="1.6"/><rect x="929.8" y="475.8" width="1.6" height="1.6"/><rect x="933.6" y="475.8" width="1.6" height="1.6"/><rect x="937.4" y="475.8" width="1.6" height="1.6"/><rect x="941.2" y="475.8" width="1.6" height="1.6"/><rect x="945.0" y="475.8" width="1.6" height="1.6"/><rect x="948.8" y="475.8" width="1.6" height="1.6"/><rect x="952.6" y="475.8" width="1.6" height="1.6"/><rect x="956.4" y="475.8" width="1.6" height="1.6"/><rect x="960.2" y="475.8" width="1.6" height="1.6"/><rect x="964.0" y="475.8" width="1.6" height="1.6"/><rect x="967.8" y="475.8" width="1.6" height="1.6"/></g><rect x="68" y="564.3" width="4" height="1.3" fill="#00ec00"/><rect x="88" y="564.3" width="6" height="1.3" fill="#00ec00"/><rect x="137" y="561.7" width="14" height="1.3" fill="#00ec00"/><rect x="173" y="561.7" width="7" height="1.3" fill="#00ec00"/><rect x="183" y="561.7" width="7" height="1.3" fill="#00ec00"/><rect x="196" y="561.7" width="8" height="1.3" fill="#00ec00"/><rect x="207" y="561.7" width="3" height="1.3" fill="#00ec00"/><rect x="980" y="561.7" width="3" height="1.3" fill="#00ec00"/>
<rect x="21" y="551" width="37" height="3" fill="#00f4fc" shape-rendering="crispEdges"/>
<polyline points="57.5,553.0 57.5,430.0 58.0,384.0 58.5,430.0 59.0,384.0 58.5,314.0 59.5,390.0 60.5,384.0 61.0,335.0 62.5,302.5 63.8,283.8 65.6,270.6 68.0,284.0 70.0,302.0 72.0,325.0 73.8,352.0 76.0,378.0 78.0,389.4 80.0,378.0 83.0,352.0 85.5,337.0 88.0,330.6 91.0,338.0 94.0,352.0 96.5,363.0 98.8,368.5 101.0,366.0 104.0,360.0 107.5,353.5 112.0,353.5 115.0,359.0 118.8,365.0 123.0,365.0 123.5,364.0 129.5,364.0 130.0,400.0 130.5,560.0 130.6,640.6 131.2,625.0 132.0,615.0 133.5,602.5 135.0,592.5" fill="none" stroke="#00f4fc" stroke-width="1.3" stroke-linejoin="round"/>
<polyline points="135.0,592.3 137.5,593.7 141.0,593.7 144.0,586.6 147.5,581.0 150.0,579.9 153.0,582.6 156.0,581.0 158.0,578.5 160.0,576.9 162.0,576.0 164.0,575.4 166.0,575.1 168.0,574.9 170.0,573.6 172.0,573.4 174.0,573.5 176.0,573.5 178.0,572.9 180.0,572.4 182.0,572.3 184.0,570.6 186.0,570.8 188.0,569.5 190.0,568.6 192.0,568.0 194.0,567.6 196.0,567.5 198.0,566.3 200.0,566.1 202.0,565.4 204.0,564.5 206.0,563.9 208.0,562.8 210.0,562.1 212.0,561.3 214.0,560.9 216.0,559.7 218.0,558.7 220.0,558.1 222.0,557.4 224.0,556.6 226.0,556.5 228.0,555.8 230.0,554.3 232.0,553.6 234.0,552.6 236.0,551.9 238.0,550.7 240.0,549.3 242.0,548.9 244.0,547.0 246.0,546.2 248.0,545.5 250.0,543.8 252.0,543.1 254.0,541.6 256.0,541.2 258.0,539.9 260.0,538.4 262.0,537.4 264.0,535.5 266.0,534.5 268.0,533.1 270.0,531.7 272.0,530.3 274.0,529.3 276.0,528.1 278.0,526.3 280.0,525.2 282.0,523.3 284.0,522.7 286.0,521.4 288.0,520.5 290.0,519.1 292.0,517.3 294.0,516.1 296.0,515.2 298.0,513.3 300.0,512.5 302.2,510.5 304.4,508.7 306.6,507.0 308.8,506.0 311.0,503.6 313.1,501.9 315.2,500.3 317.3,499.0 319.4,496.4 321.5,494.9 323.6,493.2 325.7,491.8 327.8,489.9 329.9,488.2 332.0,485.8 334.0,483.8 336.0,481.7 338.0,480.2 340.0,478.2 342.0,475.3 344.0,473.3 346.0,471.3 348.0,469.2 350.0,467.4 352.0,465.4 354.0,463.0 356.0,460.7 358.0,459.1 360.0,456.9 362.0,455.1 364.1,453.5 366.1,451.3 368.2,449.2 370.3,447.4 372.3,445.5 374.4,443.0 376.5,441.9 378.5,439.8 380.6,438.0 382.7,436.0 384.7,433.6 386.8,431.7 388.9,429.5 390.9,428.1 393.0,425.6 395.1,424.1 397.3,422.7 399.4,421.2 401.6,419.8 403.7,418.1 405.9,416.5 408.0,415.2 410.0,413.2 412.0,411.5 414.0,409.2 416.0,408.1 418.0,405.9 420.0,403.5 422.0,401.7 424.0,399.8 426.0,398.1 428.0,396.1 430.0,395.1 432.0,393.5 434.0,391.2 436.0,389.5 438.0,387.3 440.0,385.6 442.0,384.2 444.0,382.6 446.0,381.5 448.0,379.3 450.0,377.5 452.0,376.9 454.0,374.8 456.0,372.8 458.0,371.6 460.0,369.5 462.0,368.7 464.0,367.9 466.0,366.5 468.0,365.0 470.0,363.3 472.0,362.1 474.0,360.6 476.0,359.9 478.0,358.3 480.0,357.3 482.0,355.9 484.0,354.9 486.0,354.6 488.0,353.9 490.0,352.9 492.0,351.9 494.0,351.0 496.0,350.0 498.0,348.6 500.0,348.0 502.1,346.9 504.2,345.7 506.3,344.7 508.4,344.1 510.5,343.1 512.6,342.6 514.7,341.9 516.8,340.5 518.9,340.1 521.0,339.2 523.1,338.4 525.2,337.1 527.3,336.2 529.4,335.4 531.6,334.7 533.7,333.9 535.8,333.6 537.9,333.1 540.0,332.3 542.0,331.5 544.0,331.3 546.0,330.9 548.0,329.8 550.0,329.9 552.0,329.7 554.0,329.1 556.0,328.7 558.0,327.9 560.0,327.2 562.0,327.4 564.0,326.6 566.0,326.7 568.0,326.5 570.0,325.5 572.0,325.1 574.0,325.3 576.0,324.7 578.0,323.8 580.0,323.3 582.0,323.2 584.0,323.8 586.0,323.5 588.0,322.7 590.0,323.2 592.0,323.2 594.0,322.7 596.0,322.2 598.0,322.2 600.0,321.6 602.0,321.5 604.0,322.5 606.0,322.1 608.0,322.0 610.0,322.4 612.0,321.9 614.0,322.9 616.0,323.4 618.0,323.4 620.0,324.0 622.0,324.6 624.0,325.1 626.0,326.0 628.0,326.2 630.0,326.9 632.2,327.7 634.4,329.6 636.6,330.2 638.8,331.4 641.0,332.6 643.1,333.5 645.2,333.5 647.3,334.6 649.4,334.7 651.6,335.3 653.7,335.9 655.8,335.9 657.9,336.9 660.0,337.2 662.0,337.9 664.0,339.6 666.0,339.9 668.0,341.1 670.0,342.2 672.0,343.0 674.0,343.6 676.0,344.7 678.0,345.7 680.0,346.8 682.0,347.2 684.0,348.7 686.0,349.4 688.0,350.5 690.0,352.0 692.0,352.8 694.0,353.9 696.0,355.2 698.0,356.4 700.0,356.9 702.1,358.5 704.2,359.8 706.3,361.2 708.4,362.8 710.5,364.0 712.6,365.4 714.7,366.8 716.8,368.6 718.9,369.8 721.0,371.4 723.1,372.9 725.2,373.6 727.3,375.3 729.4,377.1 731.6,378.4 733.7,379.1 735.8,380.5 737.9,382.2 740.0,383.3 742.0,384.7 744.0,385.7 746.0,387.6 748.0,388.9 750.0,390.2 752.0,390.7 754.0,392.5 756.0,393.7 758.0,394.4 760.0,396.4 762.0,398.0 764.0,398.7 766.0,401.0 768.0,401.9 770.0,403.5 772.0,405.5 774.0,406.8 776.0,407.7 778.0,409.4 780.0,411.0 782.0,412.1 784.0,413.2 786.0,414.6 788.0,416.3 790.0,416.9 792.0,418.7 794.0,419.8 796.0,420.7 798.0,422.3 800.0,423.8 802.0,425.1 804.0,426.0 806.0,428.3 808.0,429.5 810.0,431.1 812.0,431.6 814.0,433.1 816.0,434.3 818.0,436.4 820.0,437.3 822.0,438.6 824.0,440.3 826.0,442.3 828.0,443.6 830.0,444.5 832.0,445.8 834.0,448.1 836.0,449.2 838.0,450.8 840.0,451.6 842.0,453.2 844.0,455.4 846.0,456.7 848.0,458.0 850.0,460.4 852.0,461.7 854.0,463.5 856.0,464.4 858.0,466.8 860.0,467.6 862.0,470.3 864.0,471.8 866.0,473.5 868.0,475.7 870.0,477.9 872.0,479.2 874.0,480.9 876.0,483.2 878.0,484.8 880.0,486.6 882.1,488.2 884.2,489.7 886.2,491.5 888.3,493.1 890.4,494.7 892.5,496.8 894.6,497.9 896.7,499.7 898.8,500.9 900.8,502.7 902.9,503.9 905.0,505.8 907.1,507.2 909.2,509.5 911.2,511.0 913.3,512.3 915.4,514.2 917.5,516.4 919.5,517.2 921.6,519.5 923.7,520.8 925.8,522.5 927.8,524.5 929.9,525.7 932.0,527.5 934.0,529.5 936.0,531.6 938.0,532.8 940.0,535.2 942.0,536.9 944.0,538.6 946.0,540.2 948.0,542.0 950.0,543.6 952.0,545.1 954.0,546.5 956.0,548.6 958.0,549.5 960.0,550.9 962.0,552.3 964.0,554.5 966.0,555.9 968.0,557.2 969.5,562.0" fill="none" stroke="#00f4fc" stroke-width="2.1" stroke-linejoin="round"/>
<polyline points="969.5,562.0 969.8,500.5 970.3,541.0 970.8,503.0 971.3,542.0 971.8,510.0 972.3,536.0 973.5,519.0 975.0,529.0 976.2,523.0 977.5,521.6 978.6,518.0 980.0,513.8 981.2,516.5 982.5,515.0 983.5,518.0 984.5,519.0 985.6,514.0 986.3,506.0 986.6,538.0 987.2,509.0 987.6,536.0 988.5,530.0 990.0,541.0 992.0,548.0 994.0,554.4 997.0,553.6 999.0,552.4 1001.0,555.0 1003.0,556.8 1005.0,563.0 1007.0,572.4 1010.0,583.3 1012.5,588.0 1013.8,591.0 1014.3,581.8 1014.8,594.2 1017.0,592.7 1020.0,598.2 1021.0,599.0" fill="none" stroke="#00f4fc" stroke-width="1.5" stroke-linejoin="round"/>
<g stroke="#00f4fc" stroke-width="1"><line x1="311.5" x2="311.5" y1="497.0" y2="508.2"/><line x1="332.5" x2="332.5" y1="479.0" y2="490.2"/><line x1="362.5" x2="362.5" y1="447.0" y2="459.8"/><line x1="393.5" x2="393.5" y1="420.0" y2="429.6"/><line x1="408.5" x2="408.5" y1="409.5" y2="419.1"/><line x1="424.5" x2="424.5" y1="394.0" y2="403.6"/><line x1="514.5" x2="514.5" y1="335.8" y2="345.4"/><line x1="536.5" x2="536.5" y1="328.4" y2="336.4"/><line x1="550.5" x2="550.5" y1="324.8" y2="332.8"/><line x1="560.5" x2="560.5" y1="323.5" y2="329.9"/><line x1="641.5" x2="641.5" y1="327.5" y2="335.5"/><line x1="692.5" x2="692.5" y1="349.8" y2="354.6"/><line x1="706.5" x2="706.5" y1="358.0" y2="362.8"/><line x1="806.5" x2="806.5" y1="423.8" y2="430.2"/><line x1="840.5" x2="840.5" y1="449.0" y2="453.8"/><line x1="862.5" x2="862.5" y1="466.9" y2="471.7"/></g>
</g><g><polygon points="521,17 533,17 527,22.5" fill="#ff9800"/><path d="M520.8,25.2 q0,-1.2 1.2,-1.2 h10 q1.2,0 1.2,1.2 v10.3 l-6.2,3.2 l-6.2,-3.2 z" fill="#ff9800"/><path d="M522,26 h10 M527,26 v9.3" stroke="#000" stroke-width="1.9" fill="none"/><circle cx="539.6" cy="29.6" r="8.2" fill="#ff4400"/><text x="539.6" y="34.2" font-size="15" fill="#000" text-anchor="middle" font-family="Liberation Sans" stroke="#000" stroke-width="0.3">a</text><circle cx="585" cy="29.6" r="8.2" fill="#ff4400"/><text x="585" y="34.2" font-size="15" fill="#000" text-anchor="middle" font-family="Liberation Sans" stroke="#000" stroke-width="0.3">b</text><polygon points="224.3,167 236.3,167 230.3,172.5" fill="#ff9800"/><path d="M224.10000000000002,175.2 q0,-1.2 1.2,-1.2 h10 q1.2,0 1.2,1.2 v10.3 l-6.2,3.2 l-6.2,-3.2 z" fill="#ff9800"/><path d="M225.3,176 h10 M230.3,176 v9.3" stroke="#000" stroke-width="1.9" fill="none"/><circle cx="266" cy="180" r="8.2" fill="#ff4400"/><text x="266" y="184.6" font-size="15" fill="#000" text-anchor="middle" font-family="Liberation Sans" stroke="#000" stroke-width="0.3">a</text><circle cx="895" cy="180" r="8.2" fill="#ff4400"/><text x="895" y="184.8" font-size="15" fill="#000" text-anchor="middle" font-family="Liberation Sans" stroke="#000" stroke-width="0.3">b</text></g>
</svg>
<div class="box" style="left:20px;top:652px;width:555px;height:21px;border-color:#f0f0f0"></div>
<div class="box" style="left:20px;top:674px;width:555px;height:39px;border-color:#f0f0f0"></div>
<div class="box" style="left:582px;top:670px;width:148px;height:38px"></div>
<div class="box" style="left:737px;top:670px;width:107px;height:38px"></div>
<div class="box" style="left:851px;top:670px;width:171px;height:38px"></div>
<div class="box" style="left:909px;top:729px;width:113px;height:38px"></div>
<div class="box" style="left:734px;top:190px;width:287px;height:60px;border-color:#e4e4ec"></div>
<div class="btn" style="left:20px"></div><div class="btn" style="left:138px"></div><div class="btn" style="left:256px"></div>
<div class="btn" style="left:374px"></div><div class="btn" style="left:492px"></div><div class="btn" style="left:610px"></div>
<div class="hl" style="left:51px;top:742px;width:52px;height:16px"></div>
<div class="hl" style="left:166px;top:742px;width:60px;height:16px"></div>
<div style="position:absolute;left:0;top:0;width:1024px;height:768px;will-change:transform"><svg width="1024" height="768" viewBox="0 0 1024 768"><polygon points="0.5,122.69999999999999 13,122.69999999999999 19.5,130.7 13,138.7 0.5,138.7" fill="#000" stroke="#e400e4" stroke-width="1.3"/><text x="7.5" y="136.29999999999998" font-size="15" font-weight="normal" fill="#e400e4" text-anchor="middle" font-family="Liberation Sans">3</text><polygon points="0.5,110.4 13,110.4 19.5,118.4 13,126.4 0.5,126.4" fill="#000" stroke="#00f4fc" stroke-width="1.3"/><text x="7.5" y="124.0" font-size="15" font-weight="normal" fill="#00f4fc" text-anchor="middle" font-family="Liberation Sans">2</text><polygon points="0.5,113.5 13,113.5 19.5,121.5 13,129.5 0.5,129.5" fill="#000" stroke="#109010" stroke-width="1.3"/><text x="7.5" y="127.1" font-size="15" font-weight="normal" fill="#00ec00" text-anchor="middle" font-family="Liberation Sans">4</text><polygon points="0,75.3 1,74.3 13,74.3 19.8,82.3 13,90.3 1,90.3 0,89.3" fill="#b40000"/><polyline points="0.5,88.8 0.5,75.5 1.5,75.0 13,75.0" fill="none" stroke="#f08080" stroke-width="1.4"/><polyline points="1,89.7 13,89.7 15,87.3" fill="none" stroke="#300000" stroke-width="1.3"/><text x="7" y="87.7" font-size="15" fill="#000" text-anchor="middle" font-family="Liberation Sans" stroke="#000" stroke-width="0.15" textLength="10.5" lengthAdjust="spacingAndGlyphs">M</text><polygon points="0.5,593.5 13,593.5 19.5,601.5 13,609.5 0.5,609.5" fill="#000" stroke="#e400e4" stroke-width="1.3"/><text x="8" y="607.1" font-size="16" font-weight="normal" fill="#e400e4" text-anchor="middle" font-family="Liberation Sans">3</text><polygon points="0.5,549.3 13,549.3 19.5,557.3 13,565.3 0.5,565.3" fill="#000" stroke="#00f4fc" stroke-width="1.3"/><text x="8" y="562.9" font-size="16" font-weight="normal" fill="#00f4fc" text-anchor="middle" font-family="Liberation Sans">2</text><polygon points="0.5,559.5 13,559.5 19.5,567.5 13,575.5 0.5,575.5" fill="#000" stroke="#109010" stroke-width="1.3"/><text x="8" y="573.1" font-size="16" font-weight="normal" fill="#00ec00" text-anchor="middle" font-family="Liberation Sans">4</text><polygon points="0,410.8 1,409.8 13,409.8 19.8,417.8 13,425.8 1,425.8 0,424.8" fill="#b40000"/><polyline points="0.5,424.3 0.5,411.0 1.5,410.5 13,410.5" fill="none" stroke="#f08080" stroke-width="1.4"/><polyline points="1,425.2 13,425.2 15,422.8" fill="none" stroke="#300000" stroke-width="1.3"/><text x="7" y="423.2" font-size="15" fill="#000" text-anchor="middle" font-family="Liberation Sans" stroke="#000" stroke-width="0.15" textLength="10.5" lengthAdjust="spacingAndGlyphs">M</text><circle cx="766" cy="201.7" r="8.2" fill="#ff4400"/><text x="766" y="206.29999999999998" font-size="15" fill="#000" text-anchor="middle" font-family="Liberation Sans" stroke="#000" stroke-width="0.3">a</text><circle cx="766" cy="220.9" r="8.2" fill="#ff4400"/><text x="766" y="225.70000000000002" font-size="15" fill="#000" text-anchor="middle" font-family="Liberation Sans" stroke="#000" stroke-width="0.3">b</text><polygon points="791.5,243.9 803.5,243.9 797.5,234.7" fill="none" stroke="#d01010" stroke-width="1.3"/><polygon points="921.5,243.9 933.5,243.9 927.5,234.7" fill="none" stroke="#d01010" stroke-width="1.3"/><rect x="165" y="655.5" width="25" height="15" rx="7.5" fill="#00e8ec"/><text x="177.5" y="667.8" font-size="14" font-weight="bold" fill="#000" text-anchor="middle" font-family="Liberation Sans">2</text><rect x="304" y="655.5" width="25" height="15" rx="7.5" fill="#b010b0"/><text x="316.5" y="667.8" font-size="14" font-weight="bold" fill="#000" text-anchor="middle" font-family="Liberation Sans">3</text><rect x="443" y="655.5" width="25" height="15" rx="7.5" fill="#10b010"/><text x="455.5" y="667.8" font-size="14" font-weight="bold" fill="#000" text-anchor="middle" font-family="Liberation Sans">4</text><path d="M200.8,657 v10 M197.3,663.8 l3.5,3.7 l3.5,-3.7" fill="none" stroke="#00e8ec" stroke-width="1.4"/><path d="M283.5,663.6 v-6 h1.6 q1.3,0 1.3,1.4 q0,1.4 -1.3,1.5 h-1.6 M285.1,660.5 q1.5,0 1.5,1.5 q0,1.6 -1.5,1.6 h-1.6" fill="none" stroke="#00e8ec" stroke-width="1"/><path d="M286.6,661.6 l1.2,6 l1.5,-4.6 l1.5,4.6 l1.2,-6" fill="none" stroke="#00e8ec" stroke-width="1"/><path d="M422.5,663.6 v-6 h1.6 q1.3,0 1.3,1.4 q0,1.4 -1.3,1.5 h-1.6 M424.1,660.5 q1.5,0 1.5,1.5 q0,1.6 -1.5,1.6 h-1.6" fill="none" stroke="#c418c4" stroke-width="1"/><path d="M425.6,661.6 l1.2,6 l1.5,-4.6 l1.5,4.6 l1.2,-6" fill="none" stroke="#c418c4" stroke-width="1"/><path d="M561.0,663.6 v-6 h1.6 q1.3,0 1.3,1.4 q0,1.4 -1.3,1.5 h-1.6 M562.6,660.5 q1.5,0 1.5,1.5 q0,1.6 -1.5,1.6 h-1.6" fill="none" stroke="#18c818" stroke-width="1"/><path d="M564.1,661.6 l1.2,6 l1.5,-4.6 l1.5,4.6 l1.2,-6" fill="none" stroke="#18c818" stroke-width="1"/><rect x="26" y="677.3" width="25" height="15" rx="7.5" fill="#b00000"/><text x="38.5" y="689.5999999999999" font-size="14" font-weight="bold" fill="#000" text-anchor="middle" font-family="Liberation Sans">M</text><rect x="26" y="695.3" width="25" height="15" rx="7.5" fill="#ffff00"/><text x="38.5" y="707.5999999999999" font-size="14" font-weight="bold" fill="#000" text-anchor="middle" font-family="Liberation Sans">1</text><rect x="64" y="695.3" width="25" height="15" rx="7.5" fill="#f0f0f0"/><text x="76.5" y="707.5999999999999" font-size="14" font-weight="bold" fill="#000" text-anchor="middle" font-family="Liberation Sans">R1</text><line x1="53" x2="62" y1="702.5" y2="702.5" stroke="#d01010" stroke-width="1.3"/><rect x="587" y="691" width="12.3" height="12.8" rx="2" fill="#ff9800"/><path d="M588.4,693.4 h9.5 M593.1,693.4 v9.3" stroke="#000" stroke-width="1.9" fill="none"/><path d="M920,685 h4 l4,-8.5 h4.3" fill="none" stroke="#fff" stroke-width="1.9"/></svg>
<span class="t" style="left:0px;top:-4px;font-family:'Liberation Serif',serif;font-weight:bold;font-size:19.5px;line-height:24px;color:#000;letter-spacing:0.2px;-webkit-text-stroke:0.5px #000">Tek</span>
<span class="t" style="left:34.50px;top:-0.90px;font-size:15px;line-height:17px;letter-spacing:0.367px;color:#fff;transform:scaleX(1.1);transform-origin:0 0">Run</span>
<span class="t" style="left:587.70px;top:-0.90px;font-size:15px;line-height:17px;letter-spacing:0.755px;color:#fff;transform:scaleX(1.1);transform-origin:0 0">M 40.0ms</span>
<span class="t" style="left:925.40px;top:-0.90px;font-size:15px;line-height:17px;letter-spacing:0.454px;color:#fff;transform:scaleX(1.1);transform-origin:0 0">Trig?</span>
<span class="t" style="left:21.90px;top:149.30px;font-size:15px;line-height:17px;letter-spacing:0.391px;color:#fff;transform:scaleX(1.1);transform-origin:0 0">Zoom Factor: 10 X</span>
<span class="t" style="left:225.60px;top:149.30px;font-size:15px;line-height:17px;letter-spacing:0.802px;color:#fff;transform:scaleX(1.1);transform-origin:0 0">Zoom Position: 11.6ms</span>
<span class="t" style="left:799.90px;top:193.10px;font-size:15px;line-height:17px;letter-spacing:0.555px;color:#d01010;transform:scaleX(1.1);transform-origin:0 0">1.012ms</span>
<span class="t" style="left:928.90px;top:193.10px;font-size:15px;line-height:17px;letter-spacing:0.540px;color:#d01010;transform:scaleX(1.1);transform-origin:0 0">16.17mV</span>
<span class="t" style="left:799.50px;top:211.90px;font-size:15px;line-height:17px;letter-spacing:0.616px;color:#d01010;transform:scaleX(1.1);transform-origin:0 0">27.00ms</span>
<span class="t" style="left:927.60px;top:211.90px;font-size:15px;line-height:17px;letter-spacing:0.737px;color:#d01010;transform:scaleX(1.1);transform-origin:0 0">44.45mV</span>
<span class="t" style="left:806.00px;top:230.70px;font-size:15px;line-height:17px;letter-spacing:0.677px;color:#d01010;transform:scaleX(1.1);transform-origin:0 0">25.99ms</span>
<span class="t" style="left:936.00px;top:230.70px;font-size:15px;line-height:17px;letter-spacing:0.586px;color:#d01010;transform:scaleX(1.1);transform-origin:0 0">28.28mV</span>
<span class="t" style="left:207.40px;top:654.30px;font-size:15px;line-height:17px;letter-spacing:0.400px;color:#00ecf0;transform:scaleX(1.1);transform-origin:0 0">1.00 V</span>
<span class="t" style="left:347.00px;top:654.30px;font-size:15px;line-height:17px;letter-spacing:0.279px;color:#c418c4;transform:scaleX(1.1);transform-origin:0 0">200mV</span>
<span class="t" style="left:486.30px;top:654.30px;font-size:15px;line-height:17px;letter-spacing:0.182px;color:#18c818;transform:scaleX(1.1);transform-origin:0 0">2.00 V</span>
<span class="t" style="left:68.50px;top:676.30px;font-size:15px;line-height:17px;letter-spacing:0.279px;color:#d01010;transform:scaleX(1.1);transform-origin:0 0">500mV</span>
<span class="t" style="left:346.30px;top:676.30px;font-size:15px;line-height:17px;letter-spacing:0.452px;color:#d01010;transform:scaleX(1.1);transform-origin:0 0">Z 4.00ms</span>
<span class="t" style="left:587.50px;top:672.30px;font-size:15px;line-height:17px;letter-spacing:0.556px;color:#fff;transform:scaleX(1.1);transform-origin:0 0">Z 4.00ms</span>
<span class="t" style="left:605.80px;top:688.90px;font-size:15px;line-height:17px;letter-spacing:0.049px;color:#ff9800;transform:scaleX(1.1);transform-origin:0 0">50.61 %</span>
<span class="t" style="left:744.00px;top:671.90px;font-size:15px;line-height:17px;letter-spacing:0.641px;color:#fff;transform:scaleX(1.1);transform-origin:0 0">250kS/s</span>
<span class="t" style="left:743.70px;top:688.60px;font-size:15px;line-height:17px;letter-spacing:0.951px;color:#fff;transform:scaleX(1.1);transform-origin:0 0">100k points</span>
<span class="t" style="left:879.30px;top:672.30px;font-size:15px;line-height:17px;letter-spacing:0.463px;color:#fff;transform:scaleX(1.1);transform-origin:0 0">Aux</span>
<span class="t" style="left:966.00px;top:672.30px;font-size:15px;line-height:17px;letter-spacing:0.237px;color:#fff;transform:scaleX(1.1);transform-origin:0 0">2.70 V</span>
<span class="t" style="left:926.00px;top:731.50px;font-size:15px;line-height:17px;letter-spacing:-0.041px;color:#fff;transform:scaleX(1.1);transform-origin:0 0">3 Mar</span>
<span class="t" style="left:978.00px;top:731.50px;font-size:15px;line-height:17px;letter-spacing:0.597px;color:#fff;transform:scaleX(1.1);transform-origin:0 0">2026</span>
<span class="t" style="left:915.50px;top:748.10px;font-size:15px;line-height:17px;letter-spacing:0.799px;color:#fff;transform:scaleX(1.1);transform-origin:0 0">08:30:50</span>
<span class="t" style="left:31.40px;top:723.90px;font-size:15px;line-height:17px;letter-spacing:0.729px;color:#000;transform:scaleX(1.1);transform-origin:0 0">Utility Page</span>
<span class="t" style="left:51.70px;top:741.10px;font-size:15px;line-height:17px;letter-spacing:0.487px;color:#000;transform:scaleX(1.1);transform-origin:0 0">Config</span>
<span class="t" style="left:158.40px;top:723.90px;font-size:15px;line-height:17px;letter-spacing:0.138px;color:#000;transform:scaleX(1.1);transform-origin:0 0">Language</span>
<span class="t" style="left:165.90px;top:741.10px;font-size:15px;line-height:17px;letter-spacing:0.736px;color:#000;transform:scaleX(1.1);transform-origin:0 0">English</span>
<span class="t" style="left:280.80px;top:723.90px;font-size:15px;line-height:17px;letter-spacing:0.113px;color:#000;transform:scaleX(1.1);transform-origin:0 0">Set Date</span>
<span class="t" style="left:285.50px;top:741.10px;font-size:15px;line-height:17px;letter-spacing:0.588px;color:#000;transform:scaleX(1.1);transform-origin:0 0">&amp; Time</span>
<span class="t" style="left:391.00px;top:715.30px;font-size:15px;line-height:17px;letter-spacing:0.332px;color:#000;transform:scaleX(1.1);transform-origin:0 0">TekSecure</span>
<span class="t" style="left:411.20px;top:732.20px;font-size:15px;line-height:17px;letter-spacing:-0.551px;color:#000;transform:scaleX(1.1);transform-origin:0 0">Erase</span>
<span class="t" style="left:398.70px;top:749.10px;font-size:15px;line-height:17px;letter-spacing:0.757px;color:#000;transform:scaleX(1.1);transform-origin:0 0">Memory</span>
<span class="t" style="left:525.30px;top:732.20px;font-size:15px;line-height:17px;letter-spacing:1.060px;color:#000;transform:scaleX(1.1);transform-origin:0 0">About</span>
<span class="t" style="left:637.70px;top:715.30px;font-size:15px;line-height:17px;letter-spacing:0.100px;color:#000;transform:scaleX(1.1);transform-origin:0 0">Manage</span>
<span class="t" style="left:625.20px;top:732.20px;font-size:15px;line-height:17px;letter-spacing:0.722px;color:#000;transform:scaleX(1.1);transform-origin:0 0">Modules &amp;</span>
<span class="t" style="left:636.30px;top:749.10px;font-size:15px;line-height:17px;letter-spacing:1.013px;color:#000;transform:scaleX(1.1);transform-origin:0 0">Options</span>
</div>
</body></html>
